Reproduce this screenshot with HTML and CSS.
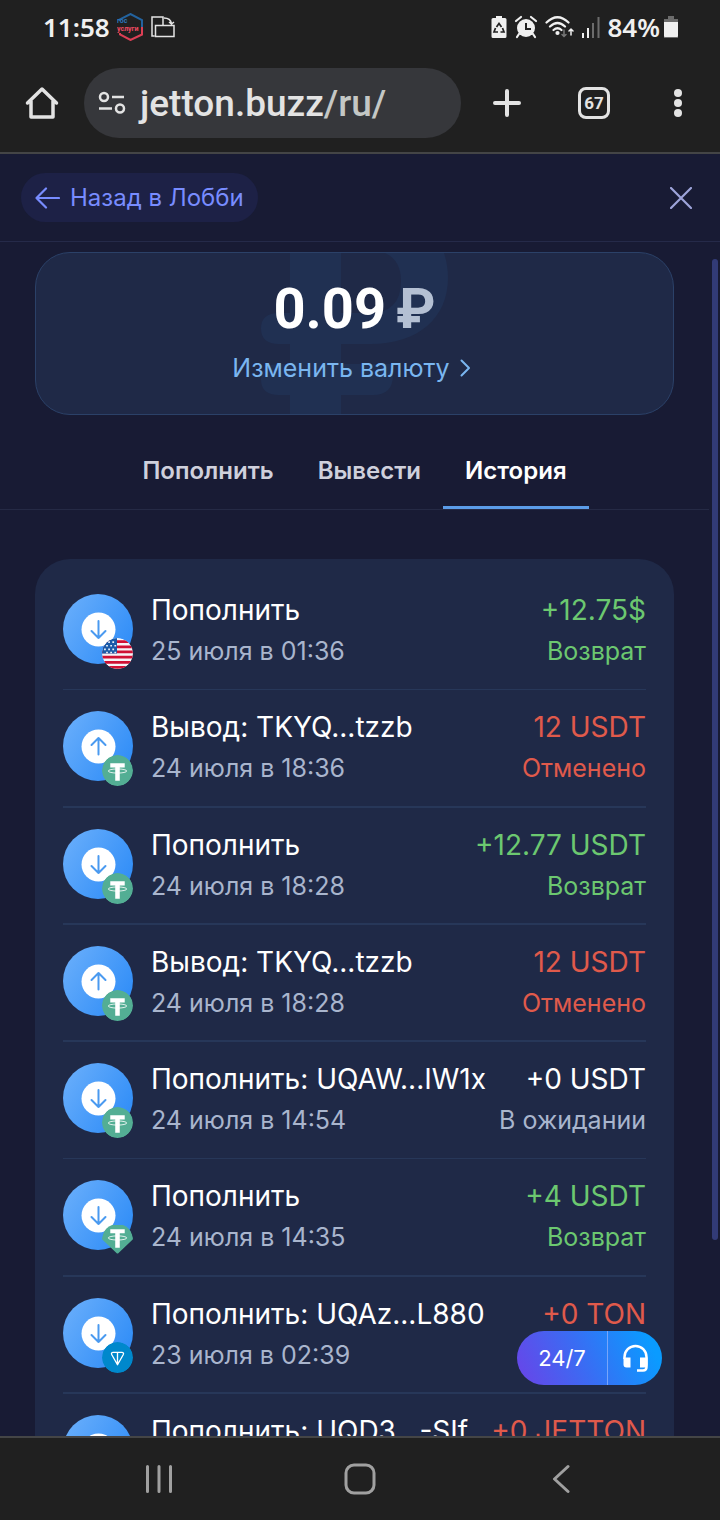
FILE: index.html
```html
<!DOCTYPE html>
<html lang="ru">
  <head>
    <meta charset="UTF-8" />
    <meta name="viewport" content="width=device-width, initial-scale=1.0" />
    <title>Jetton - История</title>
    <link rel="stylesheet" href="styles.css">
  </head>
  <body>
    <!-- Shared icons -->
    <svg class="sprite" aria-hidden="true">
      <defs>
        <linearGradient id="disc" x1="0" y1="0.2" x2="1" y2="0.8">
          <stop offset="0" stop-color="#67adfb" />
          <stop offset="1" stop-color="#2e8cf7" />
        </linearGradient>
        <clipPath id="round"><circle cx="15" cy="15" r="15" /></clipPath>
      </defs>
      <symbol id="down" viewBox="0 0 70 70">
        <circle cx="35" cy="35" r="35" fill="url(#disc)" />
        <circle cx="35.500" cy="35.500" r="17" fill="#fff" />
        <path d="M35.500 27v17M28.500 37l7 7 7-7" fill="none" stroke="#4a9af0" stroke-width="2" stroke-linecap="round" stroke-linejoin="round" />
      </symbol>
      <symbol id="up" viewBox="0 0 70 70">
        <circle cx="35" cy="35" r="35" fill="url(#disc)" />
        <circle cx="35.500" cy="35.500" r="17" fill="#fff" />
        <path d="M35.500 43.500v-16M28.500 34l7-7 7 7" fill="none" stroke="#4a9af0" stroke-width="2" stroke-linecap="round" stroke-linejoin="round" />
      </symbol>
      <symbol id="usd" viewBox="0 0 30 30">
        <g clip-path="url(#round)">
          <rect width="30" height="30" fill="#f5f3f7" />
          <path d="M0 3.500h30M0 8.500h30M0 13.500h30M0 18.500h30M0 23.500h30M0 28.500h30" stroke="#cf1034" stroke-width="2.600" />
          <rect width="14.500" height="15" fill="#1b5aa8" />
          <path d="M2 4h12M4 7.500h10M2 11h12M4 14h10" stroke="#e8f0fa" stroke-width="1.600" stroke-dasharray="1.700 2.300" />
        </g>
      </symbol>
      <symbol id="usdt" viewBox="0 0 30 30">
        <circle cx="15" cy="15" r="15" fill="#53ae94" />
        <path d="M8 8h14v4h-4.800v13h-4.400V12H8z" fill="#fff" />
        <ellipse cx="15" cy="15.500" rx="9" ry="2" fill="none" stroke="#fff" stroke-width="0.800" />
      </symbol>
      <symbol id="usdt-ton" viewBox="0 0 30 30">
        <path d="M6 1h18q1.500 0 2.300 1.300L30 13q.5 1-.3 2L16 28q-1 1-2 0L.3 15Q-.5 14 0 13L3.700 2.300Q4.500 1 6 1z" fill="#53ae94" />
        <path d="M8 5h14v4h-4.800v14h-4.400V9H8z" fill="#fff" />
        <ellipse cx="15" cy="13.500" rx="9" ry="2" fill="none" stroke="#fff" stroke-width="0.800" />
      </symbol>
      <symbol id="ton" viewBox="0 0 30 30">
        <circle cx="15" cy="15" r="15" fill="#0088cc" />
        <path d="M10.500 10h9q2 .3 1 2.300L15 22 9.500 12.300q-1-2 1-2.300zM15 10v12" fill="none" stroke="#fff" stroke-width="1.300" stroke-linejoin="round" />
      </symbol>
    </svg>

    <header class="phone-top">
      <div class="status-bar">
        <div class="status-group">
          <span class="clock">11:58</span>
          <svg width="27" height="28" viewBox="0 0 27 28" fill="none" stroke-width="2">
            <path d="M2.500 8V6.500L13.500 1l11.500 6v7" stroke="#23639f" />
            <path d="M25 14v7.500L13.500 27 3 21.500V20" stroke="#dc3f55" />
            <text x="0" y="10" class="logo-blue">гос</text>
            <text x="0" y="18" class="logo-red">услуги</text>
          </svg>
          <svg width="24" height="22" viewBox="0 0 24 22" fill="none" stroke="#e4e4e4" stroke-width="1.500">
            <path d="M3.500 20H1V1h11v8M13 2q6.500 0 7.500 5.500M18 6l2.500 2L23 6M4.500 9.500h18.500v11H4.500z" />
          </svg>
        </div>
        <div class="status-group">
          <svg width="16" height="24" viewBox="0 0 16 24">
            <path d="M5 1h6v2h3q1.500 0 1.500 1.500v17q0 1.500-1.500 1.500H2Q.5 23 .5 21.500v-17Q.5 3 2 3h3z" fill="#f0f0f0" />
            <path d="M5.500 12L8 8.500l2.500 3.500M11.500 13l1.500 4H9.500M4.500 13L3 17h4" fill="none" stroke="#222" stroke-width="1.700" />
          </svg>
          <svg width="24" height="24" viewBox="0 0 24 24">
            <circle cx="12" cy="13" r="9" fill="#f0f0f0" />
            <path d="M2 6l5-4M22 6l-5-4M5 19l-2 3M19 19l2 3" stroke="#f0f0f0" stroke-width="2.200" stroke-linecap="round" />
            <path d="M12 8v6h5" fill="none" stroke="#222" stroke-width="2" />
          </svg>
          <svg width="29" height="24" viewBox="0 0 29 24" fill="none" stroke="#f0f0f0" stroke-width="2.200" stroke-linecap="round">
            <path d="M1.500 7.500q11-10.500 22 0M5 11.500q7.500-7 15 0M8.500 15q4-3.500 8 0" />
            <circle cx="12.500" cy="18" r="1" />
            <path d="M19 15v6M17 19.500l2 2 2-2" stroke="#777" stroke-width="1.500" />
            <path d="M26 20v-6M24 16l2-2 2 2" stroke-width="1.500" />
          </svg>
          <svg width="20" height="22" viewBox="0 0 20 22" stroke-width="2">
            <path d="M2 17v5M7 12v10" stroke="#f0f0f0" />
            <path d="M12 7v15M17.500 1v21" stroke="#6c6c6c" />
          </svg>
          <div class="battery">
            84%
            <svg width="14" height="24" viewBox="0 0 14 24">
              <path d="M4 1h6v3h4v19H0V4h4z" fill="#6c6c6c" />
              <path d="M0 7h14v14q0 1-1 1H1q-1 0-1-1z" fill="#f0f0f0" />
            </svg>
          </div>
        </div>
      </div>

      <div class="browser-bar">
        <button class="bar-btn" aria-label="Домой">
          <svg width="34" height="34" viewBox="0 0 34 34" fill="none" stroke="#e3e3e3" stroke-width="3.500" stroke-linejoin="round" stroke-linecap="round">
            <path d="M2.500 17L17 3l14.500 14M6 15v16h22V15" />
          </svg>
        </button>
        <button class="address" aria-label="Адрес">
          <svg width="28" height="24" viewBox="0 0 28 24" fill="none" stroke="#e3e3e3" stroke-width="2.500">
            <circle cx="6" cy="6" r="4" />
            <path d="M14 6h12M1 17.500h13" />
            <circle cx="22" cy="17.500" r="4" />
          </svg>
          <span>jetton.buzz<span class="path">/ru/</span></span>
        </button>
        <button class="bar-btn new-tab" aria-label="Новая вкладка">
          <svg width="28" height="28" viewBox="0 0 28 28" stroke="#e3e3e3" stroke-width="4" stroke-linecap="round">
            <path d="M14 2v24M2 14h24" />
          </svg>
        </button>
        <button class="bar-btn tab-count">67</button>
        <button class="bar-btn more" aria-label="Меню">
          <svg width="8" height="28" viewBox="0 0 8 28" fill="#e3e3e3">
            <circle cx="4" cy="4" r="4" />
            <circle cx="4" cy="14" r="4" />
            <circle cx="4" cy="24" r="4" />
          </svg>
        </button>
      </div>
    </header>

    <main class="screen">
      <div class="wallet-header">
        <a href="#" class="back-link">
          <svg width="25" height="22" viewBox="0 0 25 22" fill="none" stroke="#788cff" stroke-width="2.200" stroke-linecap="round" stroke-linejoin="round">
            <path d="M24 11H1.500M11 1.500L1.500 11 11 20.500" />
          </svg>
          Назад в Лобби
        </a>
        <button class="close-btn" aria-label="Закрыть">
          <svg width="22" height="22" viewBox="0 0 22 22" stroke="#9ea4da" stroke-width="2.200" stroke-linecap="round">
            <path d="M1 1l20 20M21 1L1 21" />
          </svg>
        </button>
      </div>

      <div class="wallet">
        <section class="balance-card">
          <svg class="watermark" width="188" height="161" viewBox="0 0 188 161" fill="#203052">
            <path fill-rule="evenodd" d="M29 0H183Q187 12 187 25C187 65 157 91 110 91H80v20h52v11q0 20-20 20H80v19H29v-19H18Q0 142 0 126.500T18 111h11V91H18Q0 91 0 75.500T18 60h11zM80 0v60h28q32 0 32-32Q140 7 124 0z" />
          </svg>
          <div class="amount">0.09<span class="currency">₽</span></div>
          <a href="#" class="change-link">
            Изменить валюту
            <svg width="11" height="18" viewBox="0 0 11 18" fill="none" stroke="#7ab6f0" stroke-width="2" stroke-linecap="round" stroke-linejoin="round">
              <path d="M1.500 1.500L9 9l-7.500 7.500" />
            </svg>
          </a>
        </section>

        <nav class="tabs">
          <a href="#">Пополнить</a>
          <a href="#">Вывести</a>
          <a href="#" class="active">История</a>
        </nav>

        <ul class="history">
          <li>
            <div class="icon">
              <svg class="disc"><use href="#down" /></svg>
              <svg class="badge"><use href="#usd" /></svg>
            </div>
            <div class="info">
              <div class="title">Пополнить</div>
              <div class="date">25 июля в 01:36</div>
            </div>
            <div class="info sum green">
              <div class="title">+12.75$</div>
              <div class="date">Возврат</div>
            </div>
          </li>
          <li>
            <div class="icon">
              <svg class="disc"><use href="#up" /></svg>
              <svg class="badge"><use href="#usdt" /></svg>
            </div>
            <div class="info">
              <div class="title">Вывод: TKYQ...tzzb</div>
              <div class="date">24 июля в 18:36</div>
            </div>
            <div class="info sum red">
              <div class="title">12 USDT</div>
              <div class="date">Отменено</div>
            </div>
          </li>
          <li>
            <div class="icon">
              <svg class="disc"><use href="#down" /></svg>
              <svg class="badge"><use href="#usdt" /></svg>
            </div>
            <div class="info">
              <div class="title">Пополнить</div>
              <div class="date">24 июля в 18:28</div>
            </div>
            <div class="info sum green">
              <div class="title">+12.77 USDT</div>
              <div class="date">Возврат</div>
            </div>
          </li>
          <li>
            <div class="icon">
              <svg class="disc"><use href="#up" /></svg>
              <svg class="badge"><use href="#usdt" /></svg>
            </div>
            <div class="info">
              <div class="title">Вывод: TKYQ...tzzb</div>
              <div class="date">24 июля в 18:28</div>
            </div>
            <div class="info sum red">
              <div class="title">12 USDT</div>
              <div class="date">Отменено</div>
            </div>
          </li>
          <li>
            <div class="icon">
              <svg class="disc"><use href="#down" /></svg>
              <svg class="badge"><use href="#usdt" /></svg>
            </div>
            <div class="info">
              <div class="title">Пополнить: UQAW...IW1x</div>
              <div class="date">24 июля в 14:54</div>
            </div>
            <div class="info sum">
              <div class="title">+0 USDT</div>
              <div class="date">В ожидании</div>
            </div>
          </li>
          <li>
            <div class="icon">
              <svg class="disc"><use href="#down" /></svg>
              <svg class="badge"><use href="#usdt-ton" /></svg>
            </div>
            <div class="info">
              <div class="title">Пополнить</div>
              <div class="date">24 июля в 14:35</div>
            </div>
            <div class="info sum green">
              <div class="title">+4 USDT</div>
              <div class="date">Возврат</div>
            </div>
          </li>
          <li>
            <div class="icon">
              <svg class="disc"><use href="#down" /></svg>
              <svg class="badge"><use href="#ton" /></svg>
            </div>
            <div class="info">
              <div class="title">Пополнить: UQAz...L880</div>
              <div class="date">23 июля в 02:39</div>
            </div>
            <div class="info sum red">
              <div class="title">+0 TON</div>
            </div>
          </li>
          <li>
            <div class="icon">
              <svg class="disc"><use href="#down" /></svg>
            </div>
            <div class="info">
              <div class="title">Пополнить: UQD3...-SIf</div>
            </div>
            <div class="info sum red">
              <div class="title">+0 JETTON</div>
            </div>
          </li>
        </ul>
      </div>

      <div class="scroll-thumb"></div>

      <button class="support">
        <span class="support-text">24/7</span>
        <span class="support-icon">
          <svg width="27" height="28" viewBox="0 0 27 28" fill="none" stroke="#fff" stroke-width="2.500">
            <path d="M2.500 15v-2a11 11 0 0 1 22 0v10q0 3.500-3.500 3.500h-6" />
            <path d="M1.500 13.500h7v10h-4q-3 0-3-3zM18 13.500h7.500v7q0 3-3 3H18z" fill="#fff" stroke="none" />
          </svg>
        </span>
      </button>
    </main>

    <footer class="system-nav">
      <button aria-label="Последние">
        <svg width="28" height="30" viewBox="0 0 28 30" stroke="#a0a0a0" stroke-width="3" stroke-linecap="round">
          <path d="M2.500 2.500v25M14 2.500v25M25.500 2.500v25" />
        </svg>
      </button>
      <button aria-label="Главный экран">
        <svg width="32" height="32" viewBox="0 0 32 32" fill="none" stroke="#a0a0a0" stroke-width="3">
          <rect x="2" y="2" width="28" height="28" rx="8" />
        </svg>
      </button>
      <button aria-label="Назад">
        <svg width="18" height="30" viewBox="0 0 18 30" fill="none" stroke="#a0a0a0" stroke-width="3" stroke-linecap="round" stroke-linejoin="round">
          <path d="M16 2.500L2.500 15 16 27.500" />
        </svg>
      </button>
    </footer>
  </body>
</html>
```

FILE: styles.css
```css
* {
  box-sizing: border-box;
}

body {
  display: flex;
  flex-direction: column;
  height: 100vh;
  margin: 0;
  background-color: #181b34;
  color: #ffffff;
  font-family: Inter, Roboto, sans-serif;
  overflow: hidden;
}

svg {
  display: block;
  flex-shrink: 0;
}

a {
  text-decoration: none;
}

button {
  display: flex;
  align-items: center;
  justify-content: center;
  padding: 0;
  border: none;
  background: none;
  color: inherit;
  font-family: inherit;
  cursor: pointer;
}

.sprite {
  position: absolute;
  width: 0;
  height: 0;
}

/* Phone status bar and browser bar */
.phone-top {
  background-color: #202020;
  border-bottom: 2px solid #444546;
  font-family: Roboto, sans-serif;
}

.status-bar {
  display: flex;
  justify-content: space-between;
  align-items: center;
  height: 54px;
  padding: 0 42px 0 43px;
}

.status-group {
  display: flex;
  align-items: center;
  gap: 7px;
}

.clock,
.battery {
  color: #f0f0f0;
  font-family: "Noto Sans", sans-serif;
  font-size: 26px;
  font-weight: 600;
  line-height: 54px;
}

.battery {
  display: flex;
  align-items: center;
  gap: 4px;
}

.logo-blue,
.logo-red {
  font-size: 7px;
  font-weight: 700;
  stroke: none;
}

.logo-blue {
  fill: #2a75bb;
}

.logo-red {
  fill: #ee4a60;
}

.browser-bar {
  display: flex;
  align-items: center;
  height: 98px;
  padding: 0 38px 0 25px;
}

.bar-btn {
  flex-shrink: 0;
}

.address {
  flex: 1;
  justify-content: flex-start;
  gap: 14px;
  height: 70px;
  margin-left: 25px;
  padding: 0 14px;
  border-radius: 35px;
  background-color: #36373b;
  color: #e3e3e3;
  font-size: 37px;
  font-weight: 500;
}

.address .path {
  color: #c4c7c5;
}

.new-tab {
  margin-left: 32px;
}

.tab-count {
  width: 32px;
  height: 32px;
  margin-left: 57px;
  border: 3px solid #e3e3e3;
  border-radius: 8px;
  color: #e3e3e3;
  font-size: 17px;
  font-weight: 700;
}

.more {
  margin-left: 64px;
}

/* Wallet screen */
.screen {
  position: relative;
  flex: 1;
  min-height: 0;
  overflow: hidden;
}

.wallet-header {
  display: flex;
  justify-content: space-between;
  align-items: center;
  height: 88px;
  padding: 0 28px 0 21px;
  border-bottom: 1px solid #252a49;
}

.back-link {
  display: flex;
  align-items: center;
  gap: 10px;
  height: 49px;
  padding: 0 14px;
  border-radius: 25px;
  background-color: #1d2146;
  color: #788cff;
  font-size: 24px;
}

.wallet {
  padding-top: 10px;
  padding-right: 11px;
}

.balance-card {
  position: relative;
  display: flex;
  flex-direction: column;
  align-items: center;
  gap: 9px;
  margin: 0 35px;
  padding: 24px 0 28px;
  border: 1px solid #2b4168;
  border-radius: 35px;
  background-color: #1f2947;
  overflow: hidden;
}

.watermark {
  position: absolute;
  top: 0;
  left: 50%;
  transform: translateX(-50%);
}

.amount {
  position: relative;
  display: flex;
  gap: 10px;
  font-family: Roboto, sans-serif;
  font-size: 56px;
  font-weight: 700;
  line-height: 64px;
}

.currency {
  color: #b4c0d3;
}

.change-link {
  position: relative;
  display: flex;
  align-items: center;
  gap: 10px;
  padding-right: 6px;
  color: #7ab6f0;
  font-size: 25px;
  line-height: 36px;
}

.tabs {
  display: flex;
  justify-content: center;
  margin-top: 21px;
  border-bottom: 1px solid #252a45;
}

.tabs a {
  padding: 20px 22px;
  border-bottom: 3px solid transparent;
  color: #cfd0dc;
  font-size: 24px;
  font-weight: 600;
  line-height: 30px;
}

.tabs .active {
  border-color: #5b9ce8;
  color: #ffffff;
}

/* History list */
.history {
  margin: 49px 35px 0;
  padding: 14px 28px;
  border-radius: 35px;
  background-color: #1f2947;
  list-style: none;
}

.history li {
  display: flex;
  align-items: flex-start;
  height: 117px;
  padding-top: 21px;
  border-bottom: 2px solid #273759;
}

.history li:nth-child(4n + 1) {
  border-bottom-width: 1px;
}

.history li:nth-child(4n + 2) {
  height: 118px;
}

.icon {
  position: relative;
  width: 70px;
  height: 70px;
  margin-right: 18px;
}

.disc {
  width: 70px;
  height: 70px;
}

.badge {
  position: absolute;
  right: 0;
  bottom: -5px;
  width: 31px;
  height: 31px;
  border-radius: 50%;
}

.info {
  display: flex;
  flex-direction: column;
  gap: 9px;
  white-space: nowrap;
}

.title {
  font-size: 28px;
  line-height: 32px;
}

.date {
  color: #a9b5cd;
  font-size: 25px;
  line-height: 32px;
}

.sum {
  margin-left: auto;
  text-align: right;
}

.green,
.green .date {
  color: #6cc870;
}

.red,
.red .date {
  color: #e05a4b;
}

.scroll-thumb {
  position: absolute;
  top: 105px;
  right: 2px;
  width: 6px;
  height: 981px;
  border-radius: 3px;
  background-color: #323b77;
}

.support {
  position: absolute;
  right: 58px;
  bottom: 51px;
  height: 54px;
  border-radius: 27px;
  background: linear-gradient(65deg, #6a43e8, #3a6cf3 45%, #0a9bff 90%);
  color: #ffffff;
  font-size: 22px;
}

.support-text {
  width: 91px;
  border-right: 1px solid #78a5fa;
  line-height: 54px;
}

.support-icon {
  display: flex;
  justify-content: center;
  width: 54px;
}

/* Android navigation */
.system-nav {
  display: grid;
  grid-template-columns: repeat(3, 1fr);
  height: 84px;
  padding: 0 58px;
  border-top: 2px solid #444546;
  background-color: #202020;
}
```
